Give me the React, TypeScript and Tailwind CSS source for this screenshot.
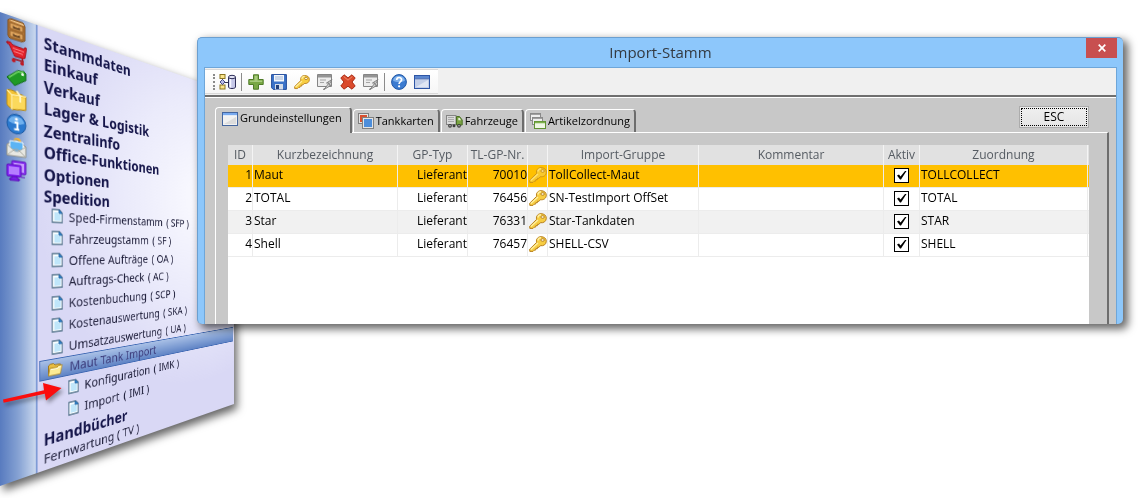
import type { ReactNode } from "react";
import clsx from "clsx";

interface ImportRow {
  id: number;
  name: string;
  type: string;
  partner: string;
  group: string;
  comment: string;
  active: boolean;
  mapping: string;
}

const rows: ImportRow[] = [
  { id: 1, name: "Maut", type: "Lieferant", partner: "70010", group: "TollCollect-Maut", comment: "", active: true, mapping: "TOLLCOLLECT" },
  { id: 2, name: "TOTAL", type: "Lieferant", partner: "76456", group: "SN-TestImport OffSet", comment: "", active: true, mapping: "TOTAL" },
  { id: 3, name: "Star", type: "Lieferant", partner: "76331", group: "Star-Tankdaten", comment: "", active: true, mapping: "STAR" },
  { id: 4, name: "Shell", type: "Lieferant", partner: "76457", group: "SHELL-CSV", comment: "", active: true, mapping: "SHELL" },
];

const sections = [
  "Stammdaten",
  "Einkauf",
  "Verkauf",
  "Lager & Logistik",
  "Zentralinfo",
  "Office-Funktionen",
  "Optionen",
  "Spedition",
];

const speditionItems = [
  { label: "Sped-Firmenstamm", code: "( SFP )" },
  { label: "Fahrzeugstamm", code: "( SF )" },
  { label: "Offene Aufträge", code: "( OA )" },
  { label: "Auftrags-Check", code: "( AC )" },
  { label: "Kostenbuchung", code: "( SCP )" },
  { label: "Kostenauswertung", code: "( SKA )" },
  { label: "Umsatzauswertung", code: "( UA )" },
];

const importItems = [
  { label: "Konfiguration", code: "( IMK )" },
  { label: "Import", code: "( IMI )" },
];

/* ---------- icons ---------- */

function KeyIcon({ className = "size-4" }: { className?: string }) {
  return (
    <svg viewBox="0 0 18 16" className={className} aria-hidden="true">
      <path
        d="M7.600 6.400C6.800 3 9 .7 12 .7c3.200 0 5.300 1.800 5.300 4.500 0 3.100-2.600 5-5.900 4.500L9.900 11.400 8.600 11.200l-.2 1.500-1.500-.1-.3 1.500-1.400.1L4 15.400H.8L.7 13.200z"
        fill="#f7cd42"
        stroke="#b8801f"
        strokeWidth="1"
        strokeLinejoin="round"
      />
      <path d="M1.800 13.600 9 7M8.800 4.500c.4-1.700 1.600-2.700 3.200-2.700" fill="none" stroke="#fdeea0" strokeWidth="1.400" />
      <ellipse cx="13.600" cy="4" rx="1.700" ry="1.300" fill="#fff6cf" stroke="#a86f16" strokeWidth=".8" />
    </svg>
  );
}

function StructureIcon() {
  return (
    <svg viewBox="0 0 17 16" className="h-4 w-[17px]" aria-hidden="true">
      <path d="M3.500 5v7M3.500 8.500h6" stroke="#33334d" strokeWidth="1" />
      <rect x="1" y=".5" width="5" height="4" fill="#fbe58c" stroke="#8a7420" />
      <rect x="1" y="11" width="5" height="4" fill="#fbe58c" stroke="#8a7420" />
      <path d="M3.500 5.500 6 8l-2.500 2.500L1 8z" fill="#b7bbe6" stroke="#4a4a86" />
      <path d="M9.500 3v10c0 2 7 2 7 0V3" fill="#c6c8e8" stroke="#2d2d57" />
      <path d="M11.500 4v9.500" stroke="#f5f5ff" strokeWidth="1.500" />
      <ellipse cx="13" cy="3" rx="3.500" ry="1.700" fill="#e4e5f6" stroke="#2d2d57" />
    </svg>
  );
}

function PlusIcon() {
  return (
    <svg viewBox="0 0 16 16" className="size-4" aria-hidden="true">
      <path d="M5.500.8h5v4.700h4.700v5h-4.700v4.700h-5v-4.700H.8v-5h4.700z" fill="#79a845" stroke="#4f7b28" />
      <path d="M6.500 1.800h3v4.700h4.700V8H1.800V6.500h4.700z" fill="#a8cb7e" />
    </svg>
  );
}

function SaveIcon() {
  return (
    <svg viewBox="0 0 16 16" className="size-4" aria-hidden="true">
      <path d="M.6.6h14.800v14.800H2.200L.6 13.800z" fill="#3c73c8" stroke="#244d9b" />
      <rect x="3" y="1" width="10" height="6.500" fill="#f4f7fb" />
      <path d="M4 3h8M4 5h8" stroke="#9fb4d4" />
      <rect x="4" y="10" width="8" height="5.500" fill="#d5dce8" />
      <rect x="5" y="11" width="3" height="4" fill="#24417c" />
    </svg>
  );
}

function FormIcon() {
  return (
    <svg viewBox="0 0 16 16" className="size-4" aria-hidden="true">
      <path d="M.5.500h14v12H.5z" fill="#ececec" stroke="#858585" />
      <path d="M1 1h13v2.500H1z" fill="#949494" />
      <path d="M3 6h6M3 8.500h4" stroke="#a5a5a5" />
      <path d="M15 5.500 9.500 9h2.500L7 15.500l7.500-4.500H12z" fill="#d2d2d2" stroke="#7c7c7c" strokeWidth=".9" />
      <path d="m6 15.500 2-1" stroke="#7c7c7c" />
    </svg>
  );
}

function DeleteIcon() {
  return (
    <svg viewBox="0 0 16 16" className="size-4" aria-hidden="true">
      <path
        d="m4 .8 4 3L12 .8 15.200 4 12 8l3.200 4-3.200 3.200-4-3-4 3L.8 12 4 8 .8 4z"
        fill="#da4a2c"
        stroke="#a92c16"
        strokeLinejoin="round"
      />
      <path d="M3.600 2.400 8 6.200l4.400-3.800" fill="none" stroke="#f08a6c" />
    </svg>
  );
}

function HelpIcon() {
  return (
    <svg viewBox="0 0 16 16" className="size-4" aria-hidden="true">
      <circle cx="8" cy="8" r="7.400" fill="#3b7bd0" stroke="#2158a6" />
      <path d="M2 6.500a6.200 6.200 0 0 1 12 0C11 8.500 5 8.500 2 6.500z" fill="#7eb0ea" />
      <path d="M5.700 6c0-3.300 4.900-3.200 4.900-.3C10.600 7.700 8.100 7.600 8.100 10" fill="none" stroke="#fff" strokeWidth="1.700" />
      <circle cx="8.100" cy="12.300" r="1.100" fill="#fff" />
    </svg>
  );
}

function FrameIcon({ light = false }: { light?: boolean }) {
  return (
    <svg viewBox="0 0 16 14" className="h-3.5 w-4 shrink-0" aria-hidden="true">
      <rect x=".5" y=".5" width="15" height="13" fill={light ? "#f1f1f1" : "#c3cfe8"} stroke={light ? "#44669f" : "#2d55a5"} />
      <path d="M1 1h14v2.500H1z" fill={light ? "#78aaf0" : "#5a86cf"} />
      <path d="M1 3.800h14" stroke={light ? "#fff" : "#2d55a5"} strokeWidth=".8" />
      <path d="M2 12 14 5v7z" fill={light ? "#dcdcdc" : "#dfe6f4"} />
    </svg>
  );
}

function CardsIcon() {
  return (
    <svg viewBox="0 0 16 16" className="size-4 shrink-0" aria-hidden="true">
      <rect x=".5" y=".5" width="10" height="10" fill="#e5e5e5" stroke="#808080" />
      <rect x="2" y="2" width="7" height="7" fill="#d9502f" />
      <rect x="4.500" y="4.500" width="11" height="11" fill="#e5e5e5" stroke="#808080" />
      <rect x="6" y="6" width="8" height="8" fill="#4d8edb" />
    </svg>
  );
}

function TruckIcon() {
  return (
    <svg viewBox="0 0 17 14" className="h-3.5 w-[17px] shrink-0" aria-hidden="true">
      <rect x=".5" y="1.500" width="9.500" height="9" fill="#dadada" stroke="#858585" />
      <path d="M2 3.500h6M2 5.500h6M2 7.500h6" stroke="#a9a9a9" />
      <path d="M10.500 2.500h3l2.700 3.500v5h-5.700z" fill="#79a343" stroke="#4b6e26" />
      <path d="M12.300 4h1.500l1.200 2.300h-2.700z" fill="#e6f0d8" />
      <circle cx="4" cy="11.800" r="1.900" fill="#3d3d3d" />
      <circle cx="8" cy="11.800" r="1.500" fill="#3d3d3d" />
      <circle cx="13" cy="11.800" r="1.900" fill="#3d3d3d" />
      <circle cx="4" cy="11.800" r=".7" fill="#ddd" />
      <circle cx="13" cy="11.800" r=".7" fill="#ddd" />
    </svg>
  );
}

function StackIcon() {
  return (
    <svg viewBox="0 0 16 16" className="size-4 shrink-0" aria-hidden="true">
      <rect x=".5" y=".5" width="10" height="7" fill="#eee" stroke="#8a8a8a" />
      <path d="M1 1.500h9" stroke="#a0a0a0" />
      <rect x="2.500" y="4.500" width="10" height="7" fill="#eee" stroke="#8a8a8a" />
      <path d="M3 5.500h9" stroke="#a0a0a0" />
      <rect x="4.500" y="8.500" width="11" height="7" fill="#eef6e4" stroke="#5f9232" />
      <path d="M5 9.500h10" stroke="#7db04b" strokeWidth="1.500" />
    </svg>
  );
}

function PageIcon() {
  return (
    <svg viewBox="0 0 14 16" className="h-4 w-3.5 shrink-0" aria-hidden="true">
      <path d="M1 1h8.500L13 4.500V15H1z" fill="#f7fdff" stroke="#56748c" strokeWidth="1.300" />
      <path d="M3.500 4h5v2H11v7H3.500z" fill="#bfe6fa" />
      <path d="M9 1v4h4z" fill="#2f86cf" stroke="#2a6ba8" />
    </svg>
  );
}

function FolderIcon() {
  return (
    <svg viewBox="0 0 19 15" className="h-[15px] w-[19px] shrink-0" aria-hidden="true">
      <path d="M1.500 13.500V3l2-1.500h4L9 3h6.500v3" fill="#e9bd3f" stroke="#9a7420" />
      <path d="M3 6h9l1.500-1.500H18l-2.500 9.500h-14z" fill="#fdeb94" stroke="#b08a2a" strokeLinejoin="round" />
      <path d="M4 7.500h8.500L14 6h2.500" fill="none" stroke="#fffbe0" />
    </svg>
  );
}

/* ---------- module bar icons ---------- */

const moduleIcons: { label: string; drawing: ReactNode }[] = [
  {
    label: "Stammdaten",
    drawing: (
      <>
        <path d="m2 3 3-2h13l2 3v15l-3 2H4l-2-2z" fill="#b97a38" stroke="#7d4c1a" />
        <path d="m3 3 3-1h12l1 2z" fill="#edc388" />
        <rect x="4" y="5" width="14" height="6" fill="#dda35c" stroke="#8d5a24" />
        <rect x="4" y="13" width="14" height="6" fill="#dda35c" stroke="#8d5a24" />
        <path d="M8 7.500v1.500h6V7.500M8 15.500v1.500h6v-1.500" fill="none" stroke="#5b3b1c" strokeWidth="1.500" />
      </>
    ),
  },
  {
    label: "Einkauf",
    drawing: (
      <>
        <path d="M1 1h4l2 2 12 1 1-2h1.500v2L20 13l-2 1H9L3 3H1z" fill="#e3202b" stroke="#a3101a" />
        <path d="m7 6 12 1M8 9l10 1" stroke="#ff8a8d" />
        <path d="m17 14 1 3H7" fill="none" stroke="#a3101a" strokeWidth="1.500" />
        <circle cx="8" cy="18.500" r="2" fill="#c01822" />
        <circle cx="17" cy="19.500" r="2" fill="#c01822" />
      </>
    ),
  },
  {
    label: "Verkauf",
    drawing: (
      <>
        <path d="m1 13 11-9 7-1 2 2v7L9 20z" fill="#1f9a24" stroke="#0e6a13" strokeLinejoin="round" />
        <path d="m3 13 9.500-8 6-1" fill="none" stroke="#74d468" strokeWidth="1.500" />
        <circle cx="17.500" cy="6.500" r="1.600" fill="#e9f8e6" />
      </>
    ),
  },
  {
    label: "Lager",
    drawing: (
      <>
        <path d="m1 2 4-1 16 4v14l-15 2-5-4z" fill="#f3c235" stroke="#b68a18" strokeLinejoin="round" />
        <path d="m1 2 5 4 15-1M6 6v15" fill="none" stroke="#fff0a8" strokeWidth="1.400" />
        <path d="M7 7.500 20 6.500v11.500L7 20z" fill="#fbd95c" />
        <path d="m11 1 4 4.500V12" fill="none" stroke="#fff5c4" strokeWidth="2" />
      </>
    ),
  },
  {
    label: "Info",
    drawing: (
      <>
        <circle cx="11" cy="11" r="10" fill="#2a79cf" stroke="#1c5aa4" />
        <path d="M2.500 9a9 9 0 0 1 17 0C15 12 7 12 2.500 9z" fill="#6fb0ee" />
        <circle cx="11" cy="6" r="1.600" fill="#fff" />
        <path d="M9 9.500h3v7M8.500 16.500h5.500" fill="none" stroke="#fff" strokeWidth="2.200" />
      </>
    ),
  },
  {
    label: "Office",
    drawing: (
      <>
        <circle cx="12" cy="5" r="4" fill="#f3b43a" />
        <path d="m1 9 10-6 10 6v11H1z" fill="#e8e8e2" stroke="#8f8f86" strokeLinejoin="round" />
        <path d="M4 5h14v7l-7 4-7-4z" fill="#5cb4f4" stroke="#f4f8fb" />
        <path d="m1 20 8-7h4l8 7M1 9l8 6h4l8-6" fill="none" stroke="#a8a89f" />
      </>
    ),
  },
  {
    label: "Optionen",
    drawing: (
      <>
        <rect x="6" y="1" width="15" height="13" rx="1" fill="#8b35f2" stroke="#5a10b8" />
        <rect x="8" y="3" width="11" height="9" fill="#c79bff" />
        <rect x="1" y="5" width="15" height="12" rx="1" fill="#8426f5" stroke="#5a10b8" />
        <rect x="3" y="7" width="11" height="8" fill="#b67dff" />
        <path d="M6 17h6v2h2v2H4v-2h2zM16 17h4" fill="#7a1fe6" stroke="#5a10b8" />
      </>
    ),
  },
];

/* ---------- navigation panel ---------- */

function NavItem({ label, code, nested = false }: { label: string; code: string; nested?: boolean }) {
  return (
    <li className={clsx("flex h-[22px] items-center", nested ? "pl-9" : "pl-4")}>
      <a href="#" className="flex items-center gap-[7px] whitespace-nowrap text-[15px] leading-[22px] text-[#20203c]">
        <PageIcon />
        <span className="flex gap-1.5">
          <span>{label}</span>
          <span>{code}</span>
        </span>
      </a>
    </li>
  );
}

function NavPanel() {
  return (
    <div className="flex h-[474px] w-[360px] origin-left bg-[#d9d8f5] font-['Noto_Sans','Open_Sans',sans-serif] [transform:perspective(71px)_rotateY(6deg)]">
      <div className="flex w-[38px] shrink-0 flex-col gap-0.5 bg-linear-to-r from-[#587bbf] via-[#86a2d3] to-[#cad8ee] pt-0.5 pl-1.5">
        {moduleIcons.map((item) => (
          <button key={item.label} type="button" aria-label={item.label} className="size-[22px]">
            <svg viewBox="0 0 22 22" className="size-[22px]" aria-hidden="true">
              {item.drawing}
            </svg>
          </button>
        ))}
      </div>
      <nav className="flex flex-1 flex-col border-l-2 border-[#7f9bd6] bg-[radial-gradient(circle_at_80%_35%,#fbfbff_0%,#ebebfb_35%,transparent_65%)] pt-1.5">
        <ul className="flex h-[184px] flex-col justify-between pl-[7px]">
          {sections.map((section) => (
            <li key={section} className="flex h-5 items-center">
              <a href="#" className="whitespace-nowrap text-[18px] leading-5 font-bold text-[#15154a]">
                {section}
              </a>
            </li>
          ))}
        </ul>
        <ul className="flex h-[236px] flex-col justify-between">
          {speditionItems.map((item) => (
            <NavItem key={item.code} {...item} />
          ))}
          <li className="mx-0.5 flex h-[22px] items-center border border-[#3f68b3] bg-linear-to-b from-[#a9c0e6] to-[#6084c5] pl-2">
            <a href="#" className="flex items-center gap-2 whitespace-nowrap text-[15px] leading-5 text-[#3c3c7c]">
              <FolderIcon />
              Maut Tank Import
            </a>
          </li>
          {importItems.map((item) => (
            <NavItem key={item.code} {...item} nested />
          ))}
        </ul>
        <div className="flex flex-col pt-1 pl-[7px] whitespace-nowrap">
          <a href="#" className="text-[18px] leading-[22px] font-bold text-[#15154a]">
            Handbücher
          </a>
          <a href="#" className="text-[15px] leading-[18px] text-[#20203c]">
            Fernwartung ( TV )
          </a>
        </div>
      </nav>
    </div>
  );
}

function Arrow() {
  return (
    <svg viewBox="0 0 64 26" className="absolute top-[381px] left-0 z-10 h-[26px] w-16 drop-shadow-[2px_3px_2px_rgba(0,0,0,0.4)]" aria-hidden="true">
      <path d="m3 18.500 41-9.300L43 2l18.500 5L46 19.500l-1.200-6.700L3.600 21.700z" fill="#fb0d0d" />
    </svg>
  );
}

/* ---------- import window ---------- */

function Toolbar() {
  const divider = <span className="-mr-px -ml-0.5 h-[18px] w-px bg-[#8b8b8b]" />;
  return (
    <div className="flex border-b-2 border-[#6f6f6f] bg-[#f0f0f0]">
      <div className="my-px flex h-[25px] items-center gap-[7px] border-y border-[#d9d9d9] bg-linear-to-b from-white to-[#f6f6f6] pr-2 pl-2">
        <span className="-mr-[3px] h-4 border-l-2 border-dotted border-[#8a8a8a]" />
        <button type="button" aria-label="Struktur"><StructureIcon /></button>
        {divider}
        <button type="button" aria-label="Neu"><PlusIcon /></button>
        <button type="button" aria-label="Speichern"><SaveIcon /></button>
        <button type="button" aria-label="Suchen"><KeyIcon /></button>
        <button type="button" aria-label="Formular"><FormIcon /></button>
        <button type="button" aria-label="Löschen"><DeleteIcon /></button>
        <button type="button" aria-label="Formular leeren"><FormIcon /></button>
        {divider}
        <button type="button" aria-label="Hilfe"><HelpIcon /></button>
        <button type="button" aria-label="Fenster"><FrameIcon /></button>
      </div>
    </div>
  );
}

function Tab({ icon, label, active = false }: { icon: ReactNode; label: string; active?: boolean }) {
  return (
    <button
      type="button"
      role="tab"
      aria-selected={active}
      className={clsx(
        "flex items-center rounded-t-sm border-t border-r-2 border-l border-t-white border-r-[#6d6d6d] border-l-white bg-[#c8c8c8] text-[11px]",
        active ? "relative -mb-px h-[26px] gap-0.5 pr-2 pb-1 pl-1.5" : "h-[23px] gap-0.5 pr-1 pl-1"
      )}
    >
      {icon}
      {label}
    </button>
  );
}

function ActiveBox({ row }: { row: ImportRow }) {
  return (
    <label className="mx-auto grid size-[15px]">
      <input
        type="checkbox"
        defaultChecked={row.active}
        aria-label={`${row.name} aktiv`}
        className="peer col-start-1 row-start-1 size-[15px] appearance-none border border-black bg-white"
      />
      <svg viewBox="0 0 15 15" className="invisible col-start-1 row-start-1 size-[15px] peer-checked:visible" aria-hidden="true">
        <path d="M3 7.500 5 6.500l1.500 2L11 3h1.500L7 11.500H6z" fill="#000" />
      </svg>
    </label>
  );
}

function ImportTable() {
  const head = "border-r border-[#f4f4f4] p-0 text-center font-normal";
  const cell = "border-r border-b border-[#ececec] p-0 pb-0.5 whitespace-nowrap";
  return (
    <table className="w-full table-fixed border-separate border-spacing-0 text-xs">
      <colgroup>
        <col className="w-[25px]" />
        <col className="w-[145px]" />
        <col className="w-[70px]" />
        <col className="w-[60px]" />
        <col className="w-5" />
        <col className="w-[151px]" />
        <col />
        <col className="w-9" />
        <col className="w-[168px]" />
        <col className="w-px" />
      </colgroup>
      <thead>
        <tr className="h-5 bg-[#e1e1e1] text-[#555b62]">
          <th className={head}>ID</th>
          <th className={head}>Kurzbezeichnung</th>
          <th className={head}>GP-Typ</th>
          <th className={head}>TL-GP-Nr.</th>
          <th className={head} />
          <th className={head}>Import-Gruppe</th>
          <th className={head}>Kommentar</th>
          <th className={head}>Aktiv</th>
          <th className={head}>Zuordnung</th>
          <th className="p-0" />
        </tr>
      </thead>
      <tbody>
        {rows.map((row, i) => (
          <tr
            key={row.id}
            className={clsx("h-[23px] leading-5", i === 0 ? "bg-[#ffc000]" : i % 2 === 0 ? "bg-[#f1f1f1]" : "bg-white")}
          >
            <td className={clsx(cell, "text-right")}>{row.id}</td>
            <td className={clsx(cell, "pl-px")}>{row.name}</td>
            <td className={clsx(cell, "text-right")}>{row.type}</td>
            <td className={clsx(cell, "text-right")}>{row.partner}</td>
            <td className={cell}>
              <KeyIcon className={clsx("mx-auto h-4 w-[18px]", i === 0 && "opacity-70")} />
            </td>
            <td className={clsx(cell, "pl-px")}>{row.group}</td>
            <td className={cell}>{row.comment}</td>
            <td className={cell}>
              <ActiveBox row={row} />
            </td>
            <td className={clsx(cell, "pl-px")}>{row.mapping}</td>
            <td className="border-b border-[#ececec] p-0" />
          </tr>
        ))}
      </tbody>
    </table>
  );
}

function ImportWindow() {
  return (
    <section className="overflow-hidden rounded-[5px] border-t border-l border-[#6b9fd0] bg-[#8dc7fb] pr-1.5 pl-1.5 shadow-[4px_4px_8px_1px_rgba(0,0,0,0.6)]">
      <header className="grid h-[29px] grid-cols-[47px_1fr_47px] items-start">
        <h1 className="col-start-2 text-center text-[15px] leading-7 text-[#333a42]">Import-Stamm</h1>
        <button type="button" aria-label="Schließen" className="ml-auto flex h-5 w-[31px] items-center justify-center bg-[#c84f50]">
          <svg viewBox="0 0 8 8" className="size-2" aria-hidden="true">
            <path d="m.7.7 6.600 6.600M7.300.7.7 7.300" stroke="#fff" strokeWidth="1.700" />
          </svg>
        </button>
      </header>
      <div className="border-x border-t border-[#6ea6d9] bg-[#c8c8c8]">
        <Toolbar />
        <div className="border-t border-white pr-[7px] pl-2.5">
          <div className="flex items-end pt-2">
            <div role="tablist" className="flex items-end gap-px">
              <Tab active icon={<FrameIcon light />} label="Grundeinstellungen" />
              <Tab icon={<CardsIcon />} label="Tankkarten" />
              <Tab icon={<TruckIcon />} label="Fahrzeuge" />
              <Tab icon={<StackIcon />} label="Artikelzordnung" />
            </div>
            <button
              type="button"
              className="mr-5 mb-1 ml-auto h-[22px] w-[70px] border border-[#acacac] bg-linear-to-b from-[#f0f0f0] to-[#e5e5e5] text-xs outline-1 -outline-offset-3 outline-black outline-dotted"
            >
              ESC
            </button>
          </div>
          <div className="border-t border-r-2 border-l border-t-white border-r-[#6d6d6d] border-l-white pt-3 pr-[18px] pl-3">
            <div className="min-h-[179px] bg-white">
              <ImportTable />
            </div>
          </div>
        </div>
      </div>
    </section>
  );
}

export default function App() {
  return (
    <div className="relative flex min-h-screen overflow-hidden bg-white pr-[17px] font-['Open_Sans','Noto_Sans',sans-serif] text-black">
      <aside className="w-[197px] shrink-0 pt-3">
        <div className="w-[360px] drop-shadow-[3px_5px_4px_rgba(0,0,0,0.6)]">
          <NavPanel />
        </div>
        <Arrow />
      </aside>
      <main className="relative min-w-0 flex-1 pt-[37px]">
        <ImportWindow />
      </main>
    </div>
  );
}
